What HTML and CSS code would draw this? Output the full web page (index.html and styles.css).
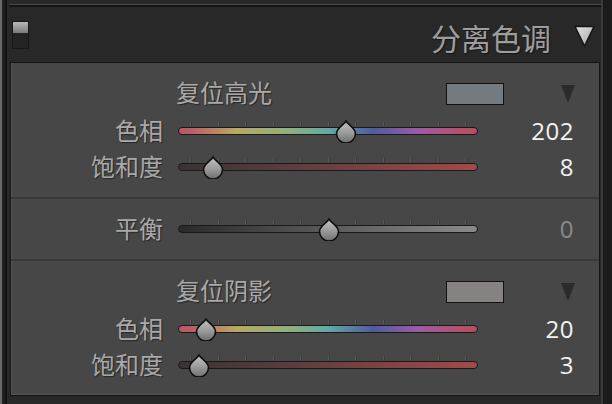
FILE: index.html
```html
<!DOCTYPE html>
<html lang="zh">
<head>
<meta charset="utf-8">
<title>分离色调</title>
<link rel="stylesheet" href="styles.css">
</head>
<body>
<svg class="defs" width="0" height="0" aria-hidden="true">
  <defs>
    <linearGradient id="thumbGrad" x1="0" y1="0" x2="0" y2="1">
      <stop offset="0" stop-color="#c4c4c4"/>
      <stop offset="0.55" stop-color="#9a9a9a"/>
      <stop offset="1" stop-color="#6e6e6e"/>
    </linearGradient>
    <linearGradient id="triGrad" x1="0" y1="0" x2="1" y2="1">
      <stop offset="0" stop-color="#e6e6e6"/>
      <stop offset="1" stop-color="#a4a4a4"/>
    </linearGradient>
  </defs>
</svg>
<div class="edge"></div>
<div class="column">
  <div class="prev"></div>
  <div class="header">
    <div class="toggle"><span class="toggle-on"></span></div>
    <div class="title">分离色调</div>
    <svg class="collapse" viewBox="0 0 21 22"><path d="M1 1.5 L20 1.5 L10.5 21 Z" fill="url(#triGrad)" stroke="#141414" stroke-width="1.5" stroke-linejoin="round"/></svg>
  </div>
  <div class="panel">
    <section class="group">
      <div class="group-head">
        <span class="group-title">复位高光</span>
        <span class="swatch swatch-hi"></span>
        <svg class="mini-tri" viewBox="0 0 14 18"><path d="M0 0 L14 0 L7 18 Z" fill="#2b2b2b"/></svg>
      </div>
      <div class="row">
        <span class="label">色相</span>
        <div class="slider">
          <div class="ticks"><i></i><i></i><i></i><i></i><i></i><i></i><i></i><i></i><i></i><i></i><i></i></div>
          <div class="track hue"></div>
          <svg class="thumb" style="left:157px" viewBox="0 0 22 23"><path d="M11 1 C12.5 4.5 20.5 8 20.5 13.5 A9.5 9.5 0 0 1 1.5 13.5 C1.5 8 9.5 4.5 11 1 Z" fill="url(#thumbGrad)" stroke="#0e0e0e" stroke-width="1.6"/></svg>
        </div>
        <span class="value">202</span>
      </div>
      <div class="row">
        <span class="label">饱和度</span>
        <div class="slider">
          <div class="ticks"><i></i><i></i><i></i><i></i><i></i><i></i><i></i><i></i><i></i><i></i><i></i></div>
          <div class="track sat"></div>
          <svg class="thumb" style="left:24px" viewBox="0 0 22 23"><path d="M11 1 C12.5 4.5 20.5 8 20.5 13.5 A9.5 9.5 0 0 1 1.5 13.5 C1.5 8 9.5 4.5 11 1 Z" fill="url(#thumbGrad)" stroke="#0e0e0e" stroke-width="1.6"/></svg>
        </div>
        <span class="value">8</span>
      </div>
    </section>
    <section class="group group-balance">
      <div class="row">
        <span class="label">平衡</span>
        <div class="slider">
          <div class="ticks"><i></i><i></i><i></i><i></i><i></i><i></i><i></i><i></i><i></i><i></i><i></i></div>
          <div class="track bal"></div>
          <svg class="thumb" style="left:140px" viewBox="0 0 22 23"><path d="M11 1 C12.5 4.5 20.5 8 20.5 13.5 A9.5 9.5 0 0 1 1.5 13.5 C1.5 8 9.5 4.5 11 1 Z" fill="url(#thumbGrad)" stroke="#0e0e0e" stroke-width="1.6"/></svg>
        </div>
        <span class="value value-dim">0</span>
      </div>
    </section>
    <section class="group">
      <div class="group-head">
        <span class="group-title">复位阴影</span>
        <span class="swatch swatch-lo"></span>
        <svg class="mini-tri" viewBox="0 0 14 18"><path d="M0 0 L14 0 L7 18 Z" fill="#2b2b2b"/></svg>
      </div>
      <div class="row">
        <span class="label">色相</span>
        <div class="slider">
          <div class="ticks"><i></i><i></i><i></i><i></i><i></i><i></i><i></i><i></i><i></i><i></i><i></i></div>
          <div class="track hue"></div>
          <svg class="thumb" style="left:17px" viewBox="0 0 22 23"><path d="M11 1 C12.5 4.5 20.5 8 20.5 13.5 A9.5 9.5 0 0 1 1.5 13.5 C1.5 8 9.5 4.5 11 1 Z" fill="url(#thumbGrad)" stroke="#0e0e0e" stroke-width="1.6"/></svg>
        </div>
        <span class="value">20</span>
      </div>
      <div class="row">
        <span class="label">饱和度</span>
        <div class="slider">
          <div class="ticks"><i></i><i></i><i></i><i></i><i></i><i></i><i></i><i></i><i></i><i></i><i></i></div>
          <div class="track sat"></div>
          <svg class="thumb" style="left:10px" viewBox="0 0 22 23"><path d="M11 1 C12.5 4.5 20.5 8 20.5 13.5 A9.5 9.5 0 0 1 1.5 13.5 C1.5 8 9.5 4.5 11 1 Z" fill="url(#thumbGrad)" stroke="#0e0e0e" stroke-width="1.6"/></svg>
        </div>
        <span class="value">3</span>
      </div>
    </section>
  </div>
</div>
</body>
</html>
```

FILE: styles.css
```css
* { box-sizing: border-box; margin: 0; padding: 0; }
html, body { width: 612px; height: 404px; overflow: hidden; }
body {
  display: flex;
  background: #1b1b1b;
  font-family: "Noto Sans CJK SC", "Noto Sans", sans-serif;
}
.defs { position: absolute; width: 0; height: 0; }
.edge {
  width: 7px;
  flex: none;
  background: linear-gradient(to right, #6a6a6a 0, #6a6a6a 2px, #202020 2px, #202020 5px, #121212 5px);
}
.column {
  width: 596px;
  flex: none;
  background: #282828;
  border-right: 2px solid #3b3b3b;
  display: flex;
  flex-direction: column;
}
.prev {
  height: 7px;
  margin-left: 2px;
  border-bottom: 2px solid #151515;
  box-shadow: inset 0 -1px 0 #464646;
}
.header {
  height: 55px;
  display: flex;
  align-items: flex-start;
  padding-left: 5px;
}
.toggle {
  margin-top: 14px;
  width: 17px;
  height: 28px;
  border: 1px solid #161616;
  background: #232323;
  display: flex;
  flex-direction: column;
}
.toggle-on {
  height: 11px;
  background: linear-gradient(#b8b8b8, #7a7a7a);
}
.title {
  margin-left: auto;
  margin-top: 12px;
  font-size: 30px;
  line-height: 36px;
  color: #9e9e9e;
  text-shadow: 1px 1px 1px #151515;
}
.collapse {
  margin: 18px 6px 0 23px;
  width: 21px;
  height: 22px;
}
.panel {
  margin-left: 3px;
  width: 590px;
  height: 334px;
  background: #474747;
  border: 1px solid #151515;
  box-shadow: inset 1px 0 0 #555, inset 0 -1px 0 #555;
}
.group {
  height: 134px;
  padding-top: 14px;
  display: flex;
  flex-direction: column;
}
.group + .group { border-top: 2px solid #393939; height: 136px; }
.group-balance { height: 62px !important; padding-top: 12px; }
.group-head {
  height: 30px;
  margin-bottom: 6px;
  display: flex;
  align-items: center;
  padding-left: 165px;
  padding-right: 24px;
}
.group-title {
  font-size: 24px;
  line-height: 30px;
  color: #a9a9a9;
  text-shadow: 1px 1px 1px #262626;
}
.swatch {
  margin-left: auto;
  margin-top: 3px;
  width: 58px;
  height: 22px;
  border: 1px solid #121212;
}
.swatch-hi { background: #737a80; }
.swatch-lo { background: #858281; }
.mini-tri {
  margin-left: 57px;
  margin-top: 4px;
  width: 14px;
  height: 18px;
}
.row {
  height: 36px;
  display: flex;
  align-items: center;
}
.label {
  width: 152px;
  text-align: right;
  font-size: 24px;
  line-height: 30px;
  color: #a9a9a9;
  text-shadow: 1px 1px 1px #262626;
  margin-top: -2px;
}
.slider {
  position: relative;
  margin-left: 15px;
  width: 300px;
  height: 36px;
  padding-top: 9px;
}
.ticks {
  height: 4px;
  margin-bottom: 1px;
  padding: 0 12px;
  display: flex;
  justify-content: space-between;
}
.ticks i {
  display: block;
  width: 1px;
  height: 4px;
  background: #585858;
  box-shadow: 1px 0 0 #3c3c3c;
}
.track {
  height: 8px;
  border-radius: 4px;
  border: 1px solid #1a1a1a;
}
.hue {
  background: linear-gradient(to right,
    #b85a66 0%, #ba5e66 4%, #b8a862 19%, #94b07a 35%, #62aaa6 50%,
    #4e5c9e 65%, #9e5aa6 80%, #b65068 96%, #b45060 100%);
}
.sat { background: linear-gradient(to right, #383434 0%, #5a3c3c 35%, #a44a4a 100%); }
.bal { background: linear-gradient(to right, #2a2a2a 0%, #5a5a5a 50%, #8a8a8a 100%); }
.thumb {
  position: absolute;
  top: 7px;
  width: 22px;
  height: 23px;
}
.value {
  width: 96px;
  text-align: right;
  font-family: "Open Sans", "Noto Sans", sans-serif;
  font-size: 24px;
  line-height: 30px;
  letter-spacing: 0.5px;
  color: #f2f2f2;
}
.value-dim { color: #8a8a8a; }
```
